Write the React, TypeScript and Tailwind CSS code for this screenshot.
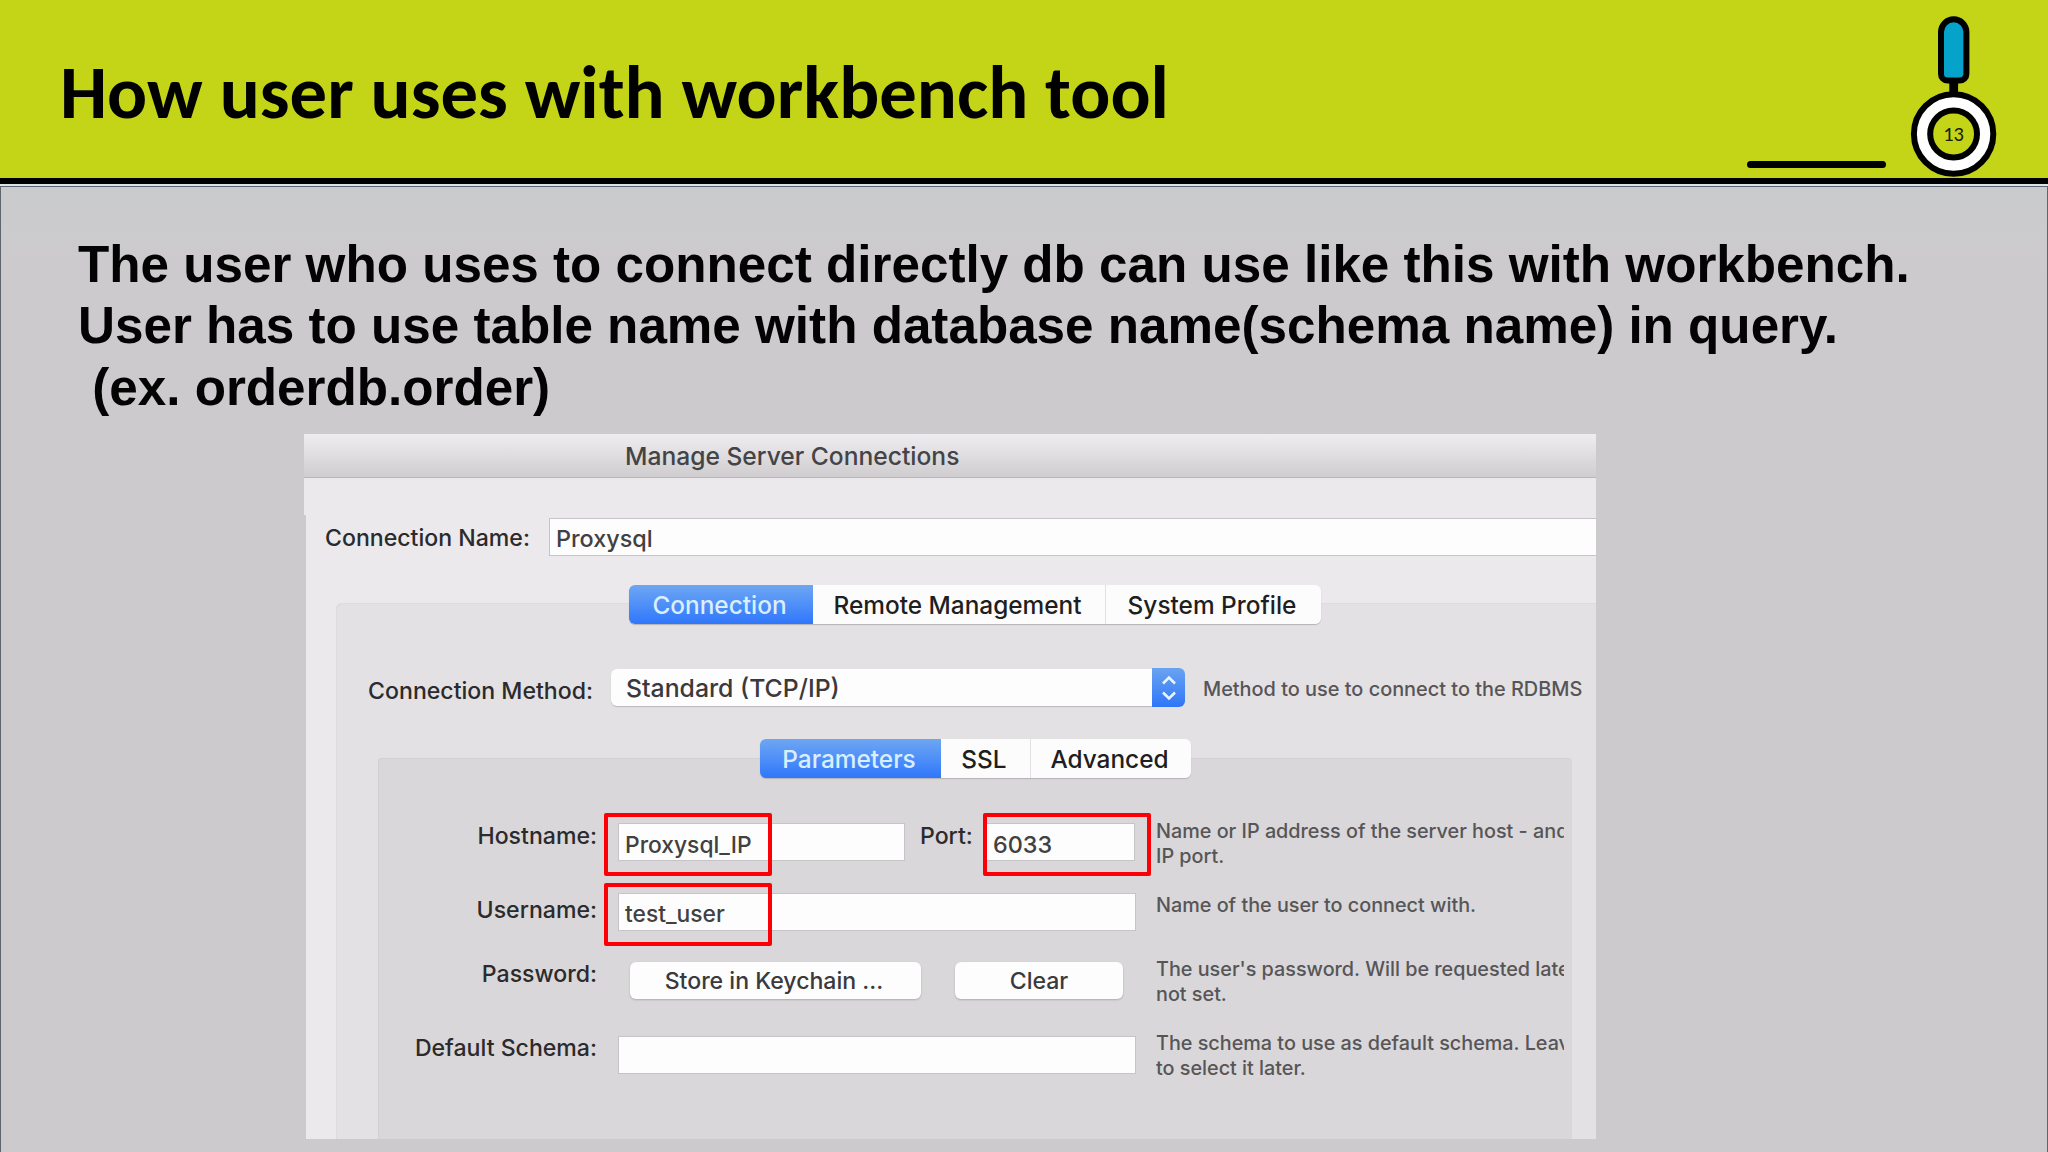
import React from "react";

interface SegmentedTabsProps {
  tabs: { label: string; width: string }[];
  className?: string;
}

interface FormRowProps {
  label: string;
  help?: string[];
  className?: string;
  labelClass?: string;
  helpClass?: string;
  children: React.ReactNode;
}

/** macOS style segmented control, first tab is the active one */
function SegmentedTabs({ tabs, className = "" }: SegmentedTabsProps) {
  return (
    <div
      className={`flex h-[39px] shrink-0 self-start rounded-md text-[24.4px] font-medium text-[#1f1e20] shadow-[0_1px_1px_#b5b3b5] ${className}`}
    >
      {tabs.map((tab, i) => (
        <div
          key={tab.label}
          className={`flex items-center justify-center whitespace-nowrap pr-[3px] pt-px ${tab.width} ${
            i === 0
              ? "rounded-l-md bg-gradient-to-b from-[#6ea6f2] to-[#2f76fb] font-[450] text-[#d9efff]"
              : "bg-[#fdfcfd]"
          } ${i === 2 ? "rounded-r-md border-l border-[#e2e0e2]" : ""}`}
        >
          {tab.label}
        </div>
      ))}
    </div>
  );
}

function TextBox({
  className = "",
  children,
}: {
  className?: string;
  children?: React.ReactNode;
}) {
  return (
    <div
      className={`relative flex h-[38px] shrink-0 items-center whitespace-nowrap border border-[#c6c4c6] bg-[#fefdfe] text-[#414042] ${className}`}
    >
      {children}
    </div>
  );
}

/** Red frame drawn over a field */
function Highlight({ className }: { className: string }) {
  return (
    <div
      className={`absolute h-[63px] rounded-[2px] border-4 border-[#fb0007] ${className}`}
    />
  );
}

function FormRow({
  label,
  help = [],
  className = "",
  labelClass = "",
  helpClass = "",
  children,
}: FormRowProps) {
  return (
    <div className={`flex h-[38px] shrink-0 items-start ${className}`}>
      <div
        className={`w-[219px] shrink-0 whitespace-nowrap text-right text-[23.1px] leading-6 text-[#2b2a2c] ${labelClass}`}
      >
        {label}
      </div>
      <div className="ml-[21px] flex w-[518px] shrink-0">{children}</div>
      <div
        className={`ml-5 w-[408px] shrink-0 overflow-hidden whitespace-nowrap text-[19.8px] leading-[25px] text-[#565557] ${helpClass}`}
      >
        {help.map((line) => (
          <div key={line}>{line}</div>
        ))}
      </div>
    </div>
  );
}

function PushButton({
  label,
  className,
}: {
  label: string;
  className: string;
}) {
  return (
    <div
      className={`flex h-[37px] items-center justify-center rounded-md bg-[#fefdfe] pt-[2px] text-[23.1px] text-[#3a393b] shadow-[0_1px_2px_#aeacae] ${className}`}
    >
      {label}
    </div>
  );
}

/** Magnifier badge with the page number */
function PageBadge() {
  return (
    <svg
      width="100"
      height="178"
      viewBox="1904 0 100 178"
      className="ml-[18px] shrink-0"
    >
      <path
        d="M1941 32a12.7 12.7 0 0 1 25.4 0V74a6.5 6.5 0 0 1-6.5 6.5h-12.4a6.5 6.5 0 0 1-6.5-6.5z"
        fill="#05a3c9"
        stroke="#000"
        strokeWidth="6"
      />
      <rect x="1949.3" y="82" width="8.8" height="13" fill="#000" />
      <circle cx="1953.6" cy="134" r="39.7" fill="#fff" stroke="#000" strokeWidth="6" />
      <circle cx="1953.6" cy="134" r="23.4" fill="#c4d416" stroke="#000" strokeWidth="6" />
      <text
        x="1953.6"
        y="141"
        textAnchor="middle"
        className="fill-[#1a1c05] font-['Carlito','Lato',sans-serif] text-[20.5px]"
      >
        13
      </text>
    </svg>
  );
}

function ConnectionDialog() {
  return (
    <div className="ml-[303px] flex h-[705px] w-[1292px] shrink-0 flex-col overflow-hidden font-['Inter','Roboto',sans-serif] font-[450]">
      <div className="flex h-11 shrink-0 items-center border-b border-[#b9b7b9] bg-gradient-to-b from-[#efedef] via-[#dfdddf] to-[#cfcdcf] pl-[321px] pt-[2px] text-[24.6px] text-[#444345]">
        Manage Server Connections
      </div>
      <div className="h-[37px] shrink-0 bg-[#ebe9eb]" />

      <div className="ml-[2px] flex flex-1 flex-col bg-[#ebe9eb] pt-[3px]">
        <div className="flex h-[38px] shrink-0 items-center">
          <div className="w-[243px] shrink-0 whitespace-nowrap pl-[19px] pt-[2px] text-[23.1px] text-[#2b2a2c]">
            Connection Name:
          </div>
          <TextBox className="w-[1060px] pl-[6px] pt-[3px] text-[23.4px]">
            Proxysql
          </TextBox>
        </div>

        {/* Connection group */}
        <div className="ml-[30px] mt-[47px] flex flex-1 flex-col rounded-tl-md bg-[#e3e1e3] shadow-[inset_1px_1px_0_#dddbdd]">
          <SegmentedTabs
            className="-mt-[18px] ml-[293px]"
            tabs={[
              { label: "Connection", width: "w-[184px]" },
              { label: "Remote Management", width: "w-[292px]" },
              { label: "System Profile", width: "w-[216px]" },
            ]}
          />

          <div className="mt-11 flex h-[39px] shrink-0 items-center">
            <div className="w-[257px] shrink-0 whitespace-nowrap pt-[7px] text-right text-[23.1px] text-[#2b2a2c]">
              Connection Method:
            </div>
            <div className="ml-[18px] flex h-[37px] w-[541px] items-center rounded-l-md bg-[#fefdfe] pl-[15px] pt-[2px] text-[24.8px] text-[#3a393b] shadow-[0_1px_1px_#bbb9bb]">
              Standard (TCP/IP)
            </div>
            <div className="flex h-[39px] w-[33px] items-center justify-center rounded-r-md bg-gradient-to-b from-[#6aa3f1] to-[#2e75f8]">
              <svg
                width="18"
                height="26"
                viewBox="0 0 18 26"
                fill="none"
                stroke="#e8f5ff"
                strokeWidth="2.6"
              >
                <path d="M3 8.5L9 2.5L15 8.5M3 17.5L9 23.5L15 17.5" />
              </svg>
            </div>
            <div className="ml-[18px] whitespace-nowrap pt-[4px] text-[19.9px] text-[#565557]">
              Method to use to connect to the RDBMS
            </div>
          </div>

          {/* Parameters group */}
          <div className="ml-[42px] mt-[51px] flex w-[1194px] flex-1 flex-col rounded-t-[4px] bg-[#d9d7d9] shadow-[inset_1px_1px_0_#d2d0d2]">
            <SegmentedTabs
              className="-mt-[19px] ml-[382px]"
              tabs={[
                { label: "Parameters", width: "w-[181px]" },
                { label: "SSL", width: "w-[89px]" },
                { label: "Advanced", width: "w-[161px]" },
              ]}
            />

            <FormRow
              label="Hostname:"
              className="mt-[45px]"
              labelClass="mt-px"
              helpClass="-mt-[4px]"
              help={["Name or IP address of the server host - and", "IP port."]}
            >
              <TextBox className="w-[287px] pl-[6px] pt-[6px] text-[22.8px]">
                Proxysql_IP
                <Highlight className="-left-[15px] -top-[11px] w-[168px]" />
              </TextBox>
              <div className="ml-[15px] mt-px w-[65px] text-[23.1px] leading-6 text-[#2b2a2c]">
                Port:
              </div>
              <TextBox className="w-[150px] pl-[7px] pt-[6px] text-[23.4px]">
                6033
                <Highlight className="-left-[3px] -top-[11px] w-[168px]" />
              </TextBox>
            </FormRow>

            <FormRow
              label="Username:"
              className="mt-8"
              labelClass="mt-[5px]"
              help={["Name of the user to connect with."]}
            >
              <TextBox className="w-[518px] pl-[6px] pt-[5px] text-[22.8px]">
                test_user
                <Highlight className="-left-[15px] -top-[11px] w-[168px]" />
              </TextBox>
            </FormRow>

            <FormRow
              label="Password:"
              className="mt-[31px]"
              helpClass="-mt-[5px]"
              help={["The user's password. Will be requested late", "not set."]}
            >
              <PushButton
                label="Store in Keychain ..."
                className="ml-[12px] w-[291px] pr-[3px]"
              />
              <PushButton label="Clear" className="ml-[34px] w-[168px]" />
            </FormRow>

            <FormRow
              label="Default Schema:"
              className="mt-9"
              helpClass="-mt-[5px]"
              help={["The schema to use as default schema. Leav", "to select it later."]}
            >
              <TextBox className="w-[518px]" />
            </FormRow>
          </div>
        </div>
      </div>
    </div>
  );
}

export default function App() {
  return (
    <div className="flex h-[1152px] w-[2048px] flex-col overflow-hidden bg-[#cdcacd]">
      <header className="flex h-[184px] shrink-0 border-b-[6px] border-black bg-[#c4d416]">
        <h1 className="w-[1747px] shrink-0 whitespace-nowrap pl-[60px] pt-[48px] font-['Carlito','Lato',sans-serif] text-[74.7px] font-bold leading-[90px] text-black">
          How user uses with workbench tool
        </h1>
        <div className="mb-[10px] h-[7px] w-[139px] shrink-0 self-end rounded-full bg-black" />
        <PageBadge />
      </header>
      <div className="h-[2px] shrink-0 bg-[#dbe3ea]" />

      <main className="flex flex-1 flex-col border-x border-t border-[#5f6570] bg-gradient-to-b from-[#cacbcc] to-[#cdcacd] to-10%">
        <p className="h-[247px] shrink-0 whitespace-pre pl-[77px] pt-[47px] font-['Liberation_Sans',Arial,sans-serif] text-[51.2px] font-bold leading-[61.4px] text-[#030303]">
          {"The user who uses to connect directly db can use like this with workbench.\nUser has to use table name with database name(schema name) in query.\n (ex. orderdb.order)"}
        </p>
        <ConnectionDialog />
      </main>
    </div>
  );
}
